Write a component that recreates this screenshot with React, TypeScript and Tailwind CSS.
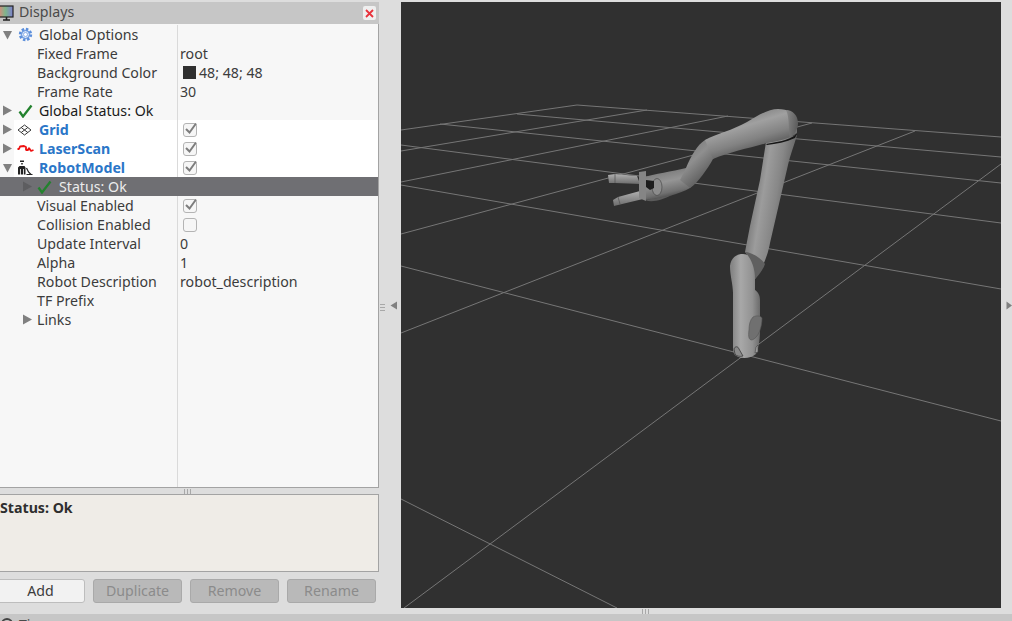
import type { ReactNode } from "react"

const font = { fontFamily: '"Noto Sans", sans-serif' }

function Arrow({ open, dim }: { open?: boolean; dim?: boolean }) {
  return (
    <svg width="11" height="11" viewBox="0 0 11 11" className="shrink-0">
      {open ? (
        <path d="M1 2 H10 L5.5 10.5 Z" fill={dim ? "#5d5d5d" : "#808080"} />
      ) : (
        <path d="M1 0.5 L10 5.5 L1 10.5 Z" fill={dim ? "#5d5d60" : "#808080"} />
      )}
    </svg>
  )
}

function CheckMark() {
  return (
    <svg width="15" height="14" viewBox="0 0 15 14" className="shrink-0">
      <path d="M1.5 7.5 L5 12.5 L13.5 1.5" fill="none" stroke="#23822e" strokeWidth="2.3" />
    </svg>
  )
}

function Gear() {
  return (
    <svg width="15" height="15" viewBox="0 0 15 15" className="shrink-0">
      <circle cx="7.5" cy="7.5" r="5.4" fill="#d6e3f7" stroke="#5b8edb" strokeWidth="2.6" strokeDasharray="2.4 1.8" />
      <circle cx="7.5" cy="7.5" r="4" fill="none" stroke="#5b8edb" strokeWidth="1" />
      <circle cx="7.5" cy="7.5" r="2" fill="#ffffff" stroke="#7ea6e4" strokeWidth="0.8" />
    </svg>
  )
}

function GridIcon() {
  return (
    <svg width="15" height="12" viewBox="0 0 15 12" className="shrink-0">
      <path d="M7.5 1 L14 6 L7.5 11 L1 6 Z M4.2 3.5 L10.8 8.5 M10.8 3.5 L4.2 8.5" fill="none" stroke="#3a3a3a" strokeWidth="1" />
    </svg>
  )
}

function LaserIcon() {
  return (
    <svg width="17" height="10" viewBox="0 0 17 10" className="shrink-0">
      <path d="M0.5 5 L2 5 L3 2.5 L7 2 L9 3 L9 6 L11 6 L12 4 L14 7 L16.5 6" fill="none" stroke="#ee1111" strokeWidth="1.8" strokeLinejoin="bevel" />
    </svg>
  )
}

function RobotIcon() {
  return (
    <svg width="16" height="17" viewBox="0 0 16 17" className="shrink-0">
      <path d="M3 1.5 H7 V3 H3 Z" fill="#222222" />
      <path d="M4 4 H6 V5.5 H4 Z" fill="#555555" />
      <path d="M1 15.5 V8.5 L2.5 7 H7.5 L8.5 8.5 V15.5 H6.8 V10 H6 V15.5 H3.8 V10 H3 V15.5 Z" fill="#222222" />
      <path d="M9.5 9 L11.5 13 L14 15.5 M9.5 15.5 H15.5" fill="none" stroke="#222222" strokeWidth="1.2" />
    </svg>
  )
}

function Checkbox({ checked }: { checked?: boolean }) {
  return (
    <div className="relative ml-[3px] h-[14px] w-[14px] rounded-[3px] border border-[#b4b4b4] bg-[#f6f6f6]">
      {checked && (
        <svg width="15" height="15" viewBox="0 0 15 15" className="absolute left-[-1px] top-[-3px]">
          <path d="M3 8 L6.5 11.5 L13 2.5" fill="none" stroke="#7d7d7d" strokeWidth="2" />
        </svg>
      )}
    </div>
  )
}

interface RowProps {
  gutter?: ReactNode
  name: ReactNode
  value?: ReactNode
  indent: string
  white?: boolean
  selected?: boolean
}

function Row({ gutter, name, value, indent, white, selected }: RowProps) {
  return (
    <div className={`flex h-[19px] items-center ${selected ? "bg-[#6f6f73]" : ""}`}>
      <div className="flex h-full w-[14px] shrink-0 items-center pl-[2px]">{gutter}</div>
      <div className={`flex h-full flex-1 items-center ${white ? "bg-white" : ""}`}>
        <div className={`flex h-full w-[164px] shrink-0 items-center ${indent} ${selected ? "" : "border-r border-[#dadada]"}`}>
          {name}
        </div>
        <div className="flex min-w-0 flex-1 items-center pl-[2px] text-[#3c3c3c]">{value}</div>
      </div>
    </div>
  )
}

function Display({ icon, label }: { icon: ReactNode; label: string }) {
  return (
    <>
      <span className="flex w-[22px] shrink-0 items-center pl-[3px]">{icon}</span>
      <span className="ml-[3px] font-bold text-[#2a76c8]">{label}</span>
    </>
  )
}

function Tree() {
  const prop = (label: string) => <span className="text-[#3c3c3c]">{label}</span>
  return (
    <div className="flex h-[464px] flex-col border-r border-b border-[#a3a3a3] bg-[#f7f7f7] pt-px text-[14.2px] leading-[19px]">
      <Row
        gutter={<Arrow open />}
        indent="pl-[4px]"
        name={
          <>
            <Gear />
            <span className="ml-[6px] text-[#3c3c3c]">Global Options</span>
          </>
        }
      />
      <Row indent="pl-[23px]" name={prop("Fixed Frame")} value="root" />
      <Row
        indent="pl-[23px]"
        name={prop("Background Color")}
        value={
          <>
            <span className="ml-[3px] h-[13px] w-[13px] bg-[#303030]" />
            <span className="ml-[3px]">48; 48; 48</span>
          </>
        }
      />
      <Row indent="pl-[23px]" name={prop("Frame Rate")} value="30" />
      <Row
        gutter={<Arrow />}
        indent="pl-[4px]"
        name={
          <>
            <CheckMark />
            <span className="ml-[6px] text-[#1a1a1a]">Global Status: Ok</span>
          </>
        }
      />
      <Row white gutter={<Arrow />} indent="" name={<Display icon={<GridIcon />} label="Grid" />} value={<Checkbox checked />} />
      <Row white gutter={<Arrow />} indent="" name={<Display icon={<LaserIcon />} label="LaserScan" />} value={<Checkbox checked />} />
      <Row white gutter={<Arrow open />} indent="" name={<Display icon={<RobotIcon />} label="RobotModel" />} value={<Checkbox checked />} />
      <Row
        selected
        indent="pl-[8px]"
        name={
          <>
            <Arrow dim />
            <span className="ml-[4px]">
              <CheckMark />
            </span>
            <span className="ml-[7px] text-[#ececec]">Status: Ok</span>
          </>
        }
      />
      <Row indent="pl-[23px]" name={prop("Visual Enabled")} value={<Checkbox checked />} />
      <Row indent="pl-[23px]" name={prop("Collision Enabled")} value={<Checkbox />} />
      <Row indent="pl-[23px]" name={prop("Update Interval")} value="0" />
      <Row indent="pl-[23px]" name={prop("Alpha")} value="1" />
      <Row indent="pl-[23px]" name={prop("Robot Description")} value="robot_description" />
      <Row indent="pl-[23px]" name={prop("TF Prefix")} />
      <Row
        indent="pl-[8px]"
        name={
          <>
            <Arrow />
            <span className="ml-[4px] text-[#3c3c3c]">Links</span>
          </>
        }
      />
      <div className="flex flex-1">
        <div className="w-[178px] border-r border-[#dadada]" />
      </div>
    </div>
  )
}

function GripH() {
  return (
    <div className="flex gap-[2px]">
      <span className="h-[5px] w-px bg-[#a8a8a8]" />
      <span className="h-[5px] w-px bg-[#a8a8a8]" />
      <span className="h-[5px] w-px bg-[#a8a8a8]" />
    </div>
  )
}

function GripV() {
  return (
    <div className="flex flex-col gap-[2px]">
      <span className="h-px w-[5px] bg-[#a8a8a8]" />
      <span className="h-px w-[5px] bg-[#a8a8a8]" />
      <span className="h-px w-[5px] bg-[#a8a8a8]" />
    </div>
  )
}

function DisabledButton({ label }: { label: string }) {
  return (
    <div className="flex h-[24px] w-[89px] items-center justify-center rounded-[3px] border border-[#a9a9a9] bg-[#b9b9b9] text-[#8b8b8b]">
      {label}
    </div>
  )
}

function DisplaysPanel() {
  return (
    <div className="flex w-[379px] shrink-0 flex-col pt-[2px]">
      <div className="flex h-[22px] items-center bg-[#c6c6c6]">
        <svg width="14" height="17" viewBox="0 0 14 17" className="shrink-0">
          <defs>
            <linearGradient id="screen" x1="0" x2="1" y1="0" y2="0">
              <stop offset="0" stopColor="#d88a7c" />
              <stop offset="0.45" stopColor="#7fb58a" />
              <stop offset="1" stopColor="#7d7fd0" />
            </linearGradient>
          </defs>
          <rect x="-1" y="1" width="14" height="11" fill="url(#screen)" stroke="#222222" strokeWidth="1.2" />
          <path d="M3 15 H10 M6.5 12 V15" stroke="#222222" strokeWidth="1.6" />
        </svg>
        <span className="mb-[2px] ml-[5px] text-[14.2px] text-[#4a4a4a]">Displays</span>
        <div className="ml-auto mr-[3px] flex h-[14px] w-[13px] items-center justify-center rounded-[2px] bg-[#efefef]">
          <svg width="9" height="9" viewBox="0 0 9 9">
            <path d="M1 1 L8 8 M8 1 L1 8" stroke="#e8323c" strokeWidth="1.8" />
          </svg>
        </div>
      </div>
      <Tree />
      <div className="flex h-[6px] items-center pl-[184px]">
        <GripH />
      </div>
      <div className="h-[78px] overflow-hidden border-r border-t border-b border-[#a3a3a3] bg-[#efece7] text-[14.2px] font-bold leading-[19px] text-[#2e2e2e]">
        <div className="pt-[3px]">Status: Ok</div>
      </div>
      <div className="mt-[7px] flex gap-[8px] text-[14.2px]">
        <div className="ml-[-4px] flex h-[24px] w-[89px] items-center justify-center rounded-[3px] border border-[#bdbdbd] bg-[#f2f2f2] text-[#3c3c3c]">
          Add
        </div>
        <DisabledButton label="Duplicate" />
        <DisabledButton label="Remove" />
        <DisabledButton label="Rename" />
      </div>
    </div>
  )
}

const GRID_LINES = [
  "M577 105 L1001 137",
  "M517 114 L1001 157",
  "M440 124 L1001 183",
  "M401 145 L1001 223",
  "M401 185 L1001 289",
  "M401 266 L1001 421",
  "M401 499 L617 608",
  "M401 130 L577 105",
  "M401 151 L647 110",
  "M401 182 L728 116",
  "M401 234 L812 123",
  "M401 333 L915 131",
  "M404 608 L1001 164",
]

function RobotView() {
  return (
    <svg width="600" height="606" viewBox="401 2 600 606" className="block">
      <defs>
        <linearGradient id="upper" gradientUnits="userSpaceOnUse" x1="752" y1="190" x2="790" y2="196">
          <stop offset="0" stopColor="#767676" />
          <stop offset="0.3" stopColor="#9c9c9c" />
          <stop offset="0.65" stopColor="#878787" />
          <stop offset="1" stopColor="#636363" />
        </linearGradient>
        <linearGradient id="elbow" gradientUnits="userSpaceOnUse" x1="745" y1="114" x2="756" y2="150">
          <stop offset="0" stopColor="#848484" />
          <stop offset="0.3" stopColor="#a0a0a0" />
          <stop offset="0.7" stopColor="#828282" />
          <stop offset="1" stopColor="#5e5e5e" />
        </linearGradient>
        <linearGradient id="bend" gradientUnits="userSpaceOnUse" x1="688" y1="146" x2="712" y2="172">
          <stop offset="0" stopColor="#7c7c7c" />
          <stop offset="0.4" stopColor="#8f8f8f" />
          <stop offset="1" stopColor="#5c5c5c" />
        </linearGradient>
        <linearGradient id="wrist" gradientUnits="userSpaceOnUse" x1="662" y1="171" x2="668" y2="198">
          <stop offset="0" stopColor="#7b7b7b" />
          <stop offset="0.4" stopColor="#959595" />
          <stop offset="0.8" stopColor="#707070" />
          <stop offset="1" stopColor="#4a4a4a" />
        </linearGradient>
        <linearGradient id="lower" gradientUnits="userSpaceOnUse" x1="732" y1="300" x2="761" y2="300">
          <stop offset="0" stopColor="#868686" />
          <stop offset="0.3" stopColor="#a8a8a8" />
          <stop offset="0.7" stopColor="#929292" />
          <stop offset="1" stopColor="#666666" />
        </linearGradient>
        <linearGradient id="cap" x1="0" y1="0" x2="1" y2="0.3">
          <stop offset="0" stopColor="#8b8b8b" />
          <stop offset="1" stopColor="#5e5e5e" />
        </linearGradient>
        <linearGradient id="finger" x1="0" y1="0" x2="0" y2="1">
          <stop offset="0" stopColor="#b0b0b0" />
          <stop offset="1" stopColor="#6c6c6c" />
        </linearGradient>
      </defs>
      <rect x="401" y="2" width="600" height="606" fill="#303030" />
      <g stroke="#767676" strokeWidth="1" fill="none">
        {GRID_LINES.map((d) => (
          <path key={d} d={d} />
        ))}
      </g>

      {/* lower link */}
      <path
        d="M730 266 C731 258 736 254 743 254 C750 254 754 260 755 268 L755 290 C758 292 760 295 760 300 L760 330 C760 342 758 350 756 354 C750 359 740 359 735 355 C733 352 733 350 733 346 L733 293 C733 285 730 275 730 266 Z"
        fill="url(#lower)"
      />
      <path d="M753 317 C757 315 761 316 762 318 C762 328 758 338 752 340 C749 340 748 337 749 330 C749 325 750 320 753 317 Z" fill="#707070" stroke="#555555" strokeWidth="0.6" />
      <path d="M734 349 C735 346 738 346 739 349 L743 356 C740 357 736 356 735 354 Z" fill="#8a8a8a" stroke="#3a3a3a" strokeWidth="0.8" />
      <path d="M756 347 L758 345 L758 352 L755 353 Z" fill="#9a9a9a" stroke="#444444" strokeWidth="0.6" />

      {/* upper link */}
      <path
        d="M766 142 L797 135 C794 146 790 155 788 165 L770 243 C768 255 762 270 755 279 C755 268 751 258 745 252 L750 226 L760 180 Z"
        fill="url(#upper)"
      />
      <path d="M745 252 C752 252 762 259 765 264 C763 270 758 276 755 279 C755 268 751 258 745 252 Z" fill="#606060" />

      {/* forearm, wrist to elbow */}
      <path d="M642 178 C655 173 672 172 686 168 L700 176 L690 188 C680 194 660 199 645 200 Z" fill="url(#wrist)" />
      <path d="M686 168 C691 156 697 145 705 140 L722 136 L716 156 L713 159 C708 168 698 183 690 188 L680 180 Z" fill="url(#bend)" />
      <path
        d="M797 122 C795 113 788 109 778 109 C768 109 757 116 747 122 C733 130 716 134 705 140 L713 159 C730 152 750 148 767 143 C778 141 790 139 797 133 Z"
        fill="url(#elbow)"
      />
      <path d="M786 110 C793 110 798 116 798 123 C798 129 795 134 790 138 C788 130 790 118 786 110 Z" fill="url(#cap)" />
      <path d="M766 144 C776 142 788 141 797 134 L795 138 C786 142 776 144 767 145 Z" fill="#161616" />

      {/* gripper */}
      <path d="M608 175 L615 174 L637 176 L640 184 L615 183 L609 183 Z" fill="url(#finger)" />
      <path d="M613 200 L618 197 L640 191 L643 199 L618 205 L614 206 Z" fill="url(#finger)" />
      <path d="M615 174 V183 M618 197 L620 204" stroke="#555555" strokeWidth="0.8" />
      <path d="M639 172 L646 171 L646 201 L639 198 Z" fill="#858585" />
      <ellipse cx="657" cy="187" rx="5" ry="8.5" fill="#8c8c8c" stroke="#505050" strokeWidth="0.8" />
      <path d="M646 180 L654 181 L654 188 L650 190 L646 187 Z" fill="#1d1d1d" />
      <path d="M645 200 C652 203 662 200 672 195 C662 197 652 199 645 200 Z" fill="#5b5b5b" />
    </svg>
  )
}

export default function App() {
  return (
    <div className="flex h-[621px] w-[1012px] flex-col overflow-hidden bg-[#dddddd]" style={font}>
      <div className="flex h-[614px] shrink-0">
        <DisplaysPanel />
        <div className="relative flex w-[22px] shrink-0 items-center">
          <div className="ml-[1px]">
            <GripV />
          </div>
          <svg width="8" height="9" viewBox="0 0 8 9" className="absolute left-[11px] top-[301px]">
            <path d="M7 0.5 V8.5 L0.5 4.5 Z" fill="#808080" />
          </svg>
        </div>
        <div className="flex shrink-0 flex-col pt-[2px]">
          <RobotView />
          <div className="flex h-[6px] items-center pl-[241px]">
            <GripH />
          </div>
        </div>
        <div className="relative flex-1">
          <svg width="6" height="9" viewBox="0 0 6 9" className="absolute left-[5px] top-[301px]">
            <path d="M0.5 0.5 V8.5 L6 4.5 Z" fill="#808080" />
          </svg>
        </div>
      </div>
      <div className="flex flex-1 items-start bg-[#c6c6c6] text-[14px] leading-[19px] text-[#4a4a4a]">
        <span className="ml-[1px] mt-[4px] h-[12px] w-[12px] shrink-0 rounded-full border-2 border-[#444444]" />
        <span className="ml-[6px] pt-[1px]">Time</span>
      </div>
    </div>
  )
}
